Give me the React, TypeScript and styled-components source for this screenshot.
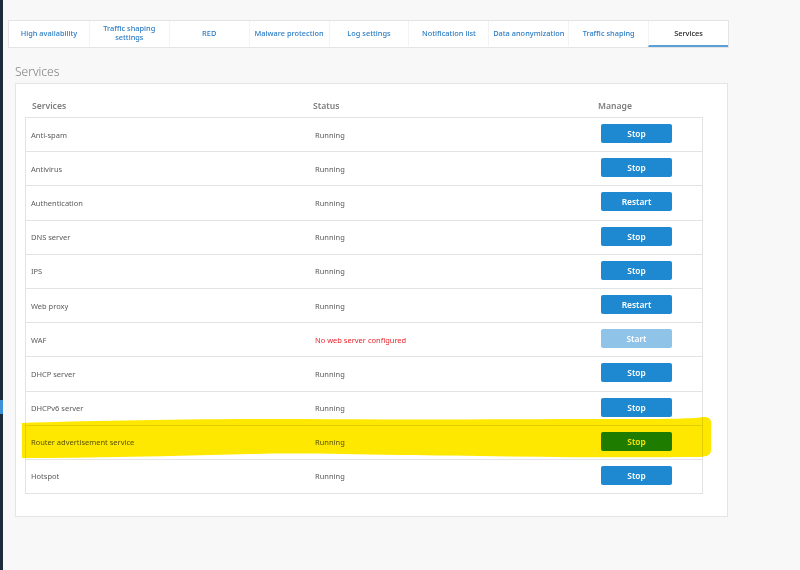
import styled, { createGlobalStyle } from "styled-components"

const GlobalStyle = createGlobalStyle`
  html, body {
    margin: 0;
    padding: 0;
    background: #f8f8f8;
  }
  body {
    font-family: "Noto Sans", "Open Sans", sans-serif;
  }
`

const Shell = styled.div`
  position: relative;
  display: flex;
  width: 800px;
  height: 570px;
  overflow: hidden;
  background: #f8f8f8;
`

const SideStrip = styled.div`
  width: 3px;
  flex-shrink: 0;
  background: #1d2c3b;
  display: flex;
  flex-direction: column;
  padding-top: 400px;
  box-sizing: border-box;
`

const SideMarker = styled.div`
  width: 3px;
  height: 14px;
  background: #3d8fd6;
`

const Main = styled.div`
  flex: 1;
  padding: 20px 0 0 5px;
  display: flex;
  flex-direction: column;
`

const TabBar = styled.div`
  display: grid;
  grid-template-columns: repeat(9, 1fr);
  width: 721px;
  height: 28px;
  background: #fff;
  border: 1px solid #e4e4e4;
  box-sizing: border-box;
`

const Tab = styled.div<{ $active?: boolean }>`
  display: flex;
  align-items: center;
  justify-content: center;
  text-align: center;
  font-size: 7.4px;
  line-height: 9px;
  font-weight: 500;
  padding: 0 2px;
  color: ${(p) => (p.$active ? "#222" : "#2b7cc4")};
  border-left: 1px solid #f3f3f3;
  border-bottom: 2px solid ${(p) => (p.$active ? "#5b9fd8" : "transparent")};
  &:first-child {
    border-left: none;
  }
`

const TabLabel = styled.span<{ $narrow?: boolean }>`
  max-width: ${(p) => (p.$narrow ? "58px" : "none")};
`

const PageTitle = styled.h2`
  margin: 14px 0 0 7px;
  height: 19px;
  font-size: 12px;
  font-weight: 300;
  color: #7b7b7b;
  line-height: 19px;
`

const Panel = styled.div`
  margin-left: 7px;
  margin-top: 2px;
  width: 713px;
  height: 434px;
  box-sizing: border-box;
  background: #fff;
  border: 1px solid #e4e4e4;
  padding: 11px 24px 0 9px;
`

const Row = styled.div<{ $head?: boolean }>`
  display: grid;
  grid-template-columns: 285px 285px 1fr;
  align-items: center;
  height: ${(p) => (p.$head ? "22px" : "33.2px")};
  border-top: ${(p) => (p.$head ? "none" : "1px solid #e3e3e3")};
`

const Table = styled.div`
  border-bottom: 1px solid #e3e3e3;
  & > ${Row}:not(:first-child) {
    border-left: 1px solid #e3e3e3;
    border-right: 1px solid #e3e3e3;
  }
`

const HeadCell = styled.div`
  font-size: 8.6px;
  font-weight: 600;
  color: #7d7d7d;
  padding-left: 3px;
  &:first-child {
    padding-left: 7px;
  }
`

const Cell = styled.div<{ $error?: boolean }>`
  font-size: 7.5px;
  color: ${(p) => (p.$error ? "#e8242c" : "#5a5a5a")};
  padding-left: 5px;
  &:nth-child(2) {
    padding-left: 4px;
  }
`

const ButtonCell = styled.div`
  display: flex;
  align-items: center;
  padding: 0 0 2px 5px;
`

const ActionButton = styled.button<{ $disabled?: boolean }>`
  width: 71px;
  height: 19px;
  border: none;
  border-radius: 2px;
  background: ${(p) => (p.$disabled ? "#8fc3e8" : "#1e88d0")};
  color: #fff;
  font-family: "Noto Sans", "Open Sans", sans-serif;
  font-size: 8.4px;
  font-weight: 600;
  padding: 0;
`

const Highlight = styled.svg`
  position: absolute;
  left: 0;
  top: 0;
  pointer-events: none;
  mix-blend-mode: multiply;
`

const tabs = [
  "High availability",
  "Traffic shaping settings",
  "RED",
  "Malware protection",
  "Log settings",
  "Notification list",
  "Data anonymization",
  "Traffic shaping",
  "Services",
]

type Service = {
  name: string
  status: string
  action: string
  error?: boolean
}

const services: Service[] = [
  { name: "Anti-spam", status: "Running", action: "Stop" },
  { name: "Antivirus", status: "Running", action: "Stop" },
  { name: "Authentication", status: "Running", action: "Restart" },
  { name: "DNS server", status: "Running", action: "Stop" },
  { name: "IPS", status: "Running", action: "Stop" },
  { name: "Web proxy", status: "Running", action: "Restart" },
  { name: "WAF", status: "No web server configured", action: "Start", error: true },
  { name: "DHCP server", status: "Running", action: "Stop" },
  { name: "DHCPv6 server", status: "Running", action: "Stop" },
  { name: "Router advertisement service", status: "Running", action: "Stop" },
  { name: "Hotspot", status: "Running", action: "Stop" },
]

export default function App() {
  return (
    <>
      <GlobalStyle />
      <Shell>
        <SideStrip>
          <SideMarker />
        </SideStrip>
        <Main>
          <TabBar>
            {tabs.map((t) => (
              <Tab key={t} $active={t === "Services"}>
                <TabLabel $narrow={t === "Traffic shaping settings"}>{t}</TabLabel>
              </Tab>
            ))}
          </TabBar>
          <PageTitle>Services</PageTitle>
          <Panel>
            <Table>
              <Row $head>
                <HeadCell>Services</HeadCell>
                <HeadCell>Status</HeadCell>
                <HeadCell>Manage</HeadCell>
              </Row>
              {services.map((s) => (
                <Row key={s.name}>
                  <Cell>{s.name}</Cell>
                  <Cell $error={s.error}>{s.status}</Cell>
                  <ButtonCell>
                    <ActionButton $disabled={s.error}>{s.action}</ActionButton>
                  </ButtonCell>
                </Row>
              ))}
            </Table>
          </Panel>
        </Main>

        {/* marker highlight drawn over the router advertisement row */}
        <Highlight width="800" height="570" viewBox="0 0 800 570">
          <path
            d="M22,423 C90,421 180,419 300,419 C420,420 520,419 620,419 C660,419 690,419 704,417 C711,417 712,421 711,429 L711,450 C711,456 706,457 696,457 C600,458 480,456 400,455 C340,454 300,453 250,454 C170,456 90,458 22,458 Z"
            fill="#ffe800"
          />
        </Highlight>
      </Shell>
    </>
  )
}
